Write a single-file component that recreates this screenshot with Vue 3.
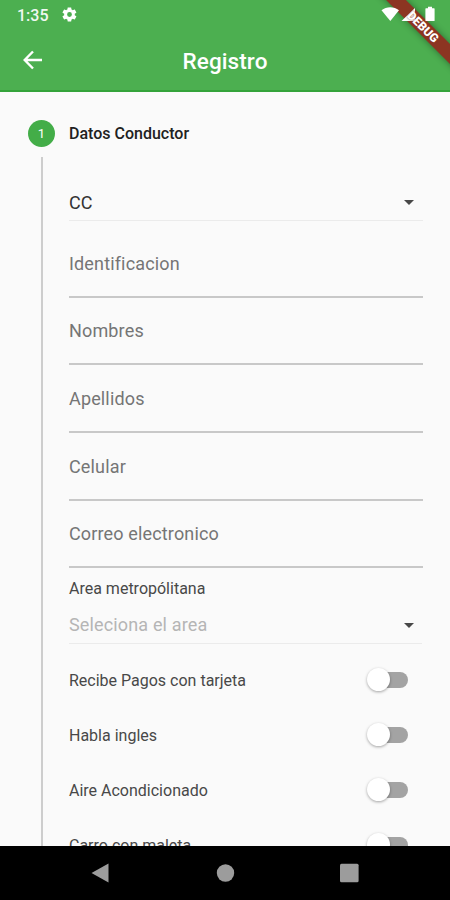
<script setup>
import { ref } from 'vue'

const fields = ['Identificacion', 'Nombres', 'Apellidos', 'Celular', 'Correo electronico']

const options = ref([
  { label: 'Recibe Pagos con tarjeta', on: false },
  { label: 'Habla ingles', on: false },
  { label: 'Aire Acondicionado', on: false },
  { label: 'Carro con maleta', on: false }
])
</script>

<template>
  <div class="screen">
    <header class="top">
      <div class="status">
        <span class="clock">1:35</span>
        <svg class="gear" viewBox="0 0 24 24">
          <path fill-rule="evenodd" d="M19.4 13a7.5 7.5 0 0 0 0-2l2.1-1.6c.2-.2.3-.4.1-.7l-2-3.4c-.1-.3-.4-.3-.6-.2l-2.5 1a7 7 0 0 0-1.7-1l-.4-2.6c0-.3-.2-.5-.5-.5h-4c-.3 0-.5.2-.5.5L9 5.1a7 7 0 0 0-1.7 1l-2.5-1c-.2-.1-.5 0-.6.2l-2 3.4c-.1.3-.1.5.1.7L4.5 11a7.5 7.5 0 0 0 0 2l-2.2 1.6c-.2.2-.2.4-.1.7l2 3.4c.1.3.4.3.6.2l2.5-1c.5.4 1.1.7 1.7 1l.4 2.6c0 .3.2.5.5.5h4c.3 0 .5-.2.5-.5l.4-2.6a7 7 0 0 0 1.7-1l2.5 1c.2.1.5 0 .6-.2l2-3.4c.1-.3.1-.5-.1-.7zM12 15.4a3.4 3.4 0 1 1 0-6.800 3.400 3.400 0 0 1 0 6.800z" />
        </svg>
        <svg class="system" viewBox="0 0 54 18">
          <path d="M0.5 4.2C5.5 0.2 13 0.2 18 4.2L9.3 15z" />
          <path d="M34 2V15H20.5z" />
          <path d="M45 2.200h2V0.800h4v1.400h2q.6 0 .6.600v11.600q0 .6-.6.600h-8q-.6 0-.6-.6V2.800q0-.6.600-.6z" />
        </svg>
      </div>
      <div class="bar">
        <svg class="back" viewBox="0 0 20 20">
          <path d="M19 10H2M10 1.500L1.700 10L10 18.500" />
        </svg>
        <h1 class="title">Registro</h1>
      </div>
      <div class="ribbon"></div>
      <div class="ribbon-text">DEBUG</div>
    </header>

    <main class="stepper">
      <div class="step-head">
        <span class="step-number">1</span>
        <span class="step-title">Datos Conductor</span>
      </div>
      <div class="step-body">
        <div class="select">
          <span class="value">CC</span>
          <i class="caret"></i>
        </div>

        <div class="fields">
          <div v-for="field in fields" :key="field" class="field">{{ field }}</div>
        </div>

        <div class="area-label">Area metropólitana</div>
        <div class="select area">
          <span class="value">Seleciona el area</span>
          <i class="caret"></i>
        </div>

        <div v-for="option in options" :key="option.label" class="option" @click="option.on = !option.on">
          <span class="option-label">{{ option.label }}</span>
          <span class="switch" :class="{ on: option.on }"><i class="thumb"></i></span>
        </div>
      </div>
    </main>

    <nav class="nav">
      <svg class="nav-icon" viewBox="0 0 20 20"><path d="M0.500 10L17.500 0.500V19.500z" /></svg>
      <svg class="nav-icon" viewBox="0 0 20 20"><circle cx="10.500" cy="10" r="8.700" /></svg>
      <svg class="nav-icon" viewBox="0 0 20 20"><rect x="1" y="0.700" width="18.600" height="18.600" rx="1.500" /></svg>
    </nav>
  </div>
</template>

<style>
body {
  margin: 0;
  background: #fafafa;
}
</style>

<style scoped>
.screen {
  display: flex;
  flex-direction: column;
  width: 450px;
  height: 900px;
  overflow: hidden;
  background: #fafafa;
  font-family: Roboto, "Liberation Sans", sans-serif;
}

.top {
  position: relative;
  flex: none;
  box-sizing: border-box;
  height: 92px;
  overflow: hidden;
  background: #4caf50;
  border-bottom: 2px solid #34a33a;
  color: #fff;
}

.status {
  position: relative;
  z-index: 3;
  display: flex;
  align-items: center;
  height: 30px;
  padding: 0 15px 0 17px;
}

.clock {
  width: 44px;
  font-size: 16px;
  font-weight: 500;
  opacity: 0.92;
}

.gear {
  width: 17px;
  height: 17px;
  margin-top: -1px;
  fill: #fff;
}

.system {
  width: 54px;
  height: 18px;
  margin-left: auto;
  fill: #fff;
}

.bar {
  display: grid;
  grid-template-columns: 60px 1fr 60px;
  align-items: center;
  height: 60px;
}

.back {
  width: 20px;
  height: 20px;
  margin-left: 23px;
  fill: none;
  stroke: #fff;
  stroke-width: 2.4;
}

.title {
  margin: 1px 0 0;
  text-align: center;
  font-size: 22.5px;
  font-weight: 500;
  letter-spacing: 0.1px;
}

/* the status icons sit between the ribbon and its text */
.ribbon,
.ribbon-text {
  position: absolute;
  z-index: 2;
  top: 20px;
  left: 363px;
  width: 120px;
  height: 14px;
  transform: rotate(45deg);
}

.ribbon {
  background: #8c3522;
  box-shadow: 0 0 7px rgba(0, 0, 0, 0.4);
}

.ribbon-text {
  z-index: 4;
  font-size: 12px;
  font-weight: 900;
  line-height: 14px;
  text-align: center;
  text-shadow: 0 0 2px #8c3522;
}

.stepper {
  flex: 1;
  min-height: 0;
  overflow: hidden;
  padding: 28px 27px 0 28px;
}

.step-head {
  display: flex;
  align-items: center;
  gap: 14px;
  height: 27px;
}

.step-number {
  width: 27px;
  height: 27px;
  border-radius: 50%;
  background: #43ad48;
  color: #fff;
  font-size: 13px;
  line-height: 27px;
  text-align: center;
}

.step-title {
  font-size: 16px;
  font-weight: 500;
  color: #212121;
}

.step-body {
  margin: 10px 0 0 13px;
  padding: 19px 0 0 26px;
  border-left: 2px solid #cdcdcd;
}

.select {
  display: flex;
  align-items: center;
  justify-content: space-between;
  box-sizing: border-box;
  height: 45px;
  padding: 8px 9px 0 0;
  border-bottom: 1px solid #ebebeb;
  font-size: 18px;
  color: #333;
}

.caret {
  border: 5px solid transparent;
  border-top-color: #484848;
  border-bottom-width: 0;
}

.fields {
  padding-top: 9px;
}

.field {
  box-sizing: border-box;
  height: 67.7px;
  padding-top: 22.5px;
  border-bottom: 2px solid #c8c8c8;
  font-size: 18px;
  line-height: 21px;
  letter-spacing: 0.15px;
  color: #757575;
}

.area-label {
  padding-top: 11px;
  font-size: 16px;
  line-height: 20px;
  color: #484848;
}

.area {
  margin-right: 1px;
  padding-right: 8px;
  color: #b5b5b5;
  letter-spacing: 0.15px;
}

.area .value {
  line-height: 20px;
}

.option {
  display: flex;
  align-items: center;
  justify-content: space-between;
  height: 55px;
  padding-right: 15px;
}

.area + .option {
  margin-top: 8.5px;
}

.option-label {
  font-size: 16px;
  color: #484848;
}

.switch {
  position: relative;
  width: 38px;
  height: 16px;
  border-radius: 8px;
  background: #a3a3a3;
}

.thumb {
  position: absolute;
  top: -4px;
  left: -3px;
  width: 23px;
  height: 23px;
  border-radius: 50%;
  background: #fff;
  box-shadow: 0 1px 3px rgba(0, 0, 0, 0.35);
}

.switch.on {
  background: #a5d6a7;
}

.switch.on .thumb {
  left: 19px;
  background: #4caf50;
}

.nav {
  flex: none;
  display: flex;
  align-items: center;
  justify-content: space-between;
  box-sizing: border-box;
  height: 54px;
  padding: 0 91px;
  background: #000;
}

.nav-icon {
  width: 20px;
  height: 20px;
  fill: #9c9c9c;
}
</style>
